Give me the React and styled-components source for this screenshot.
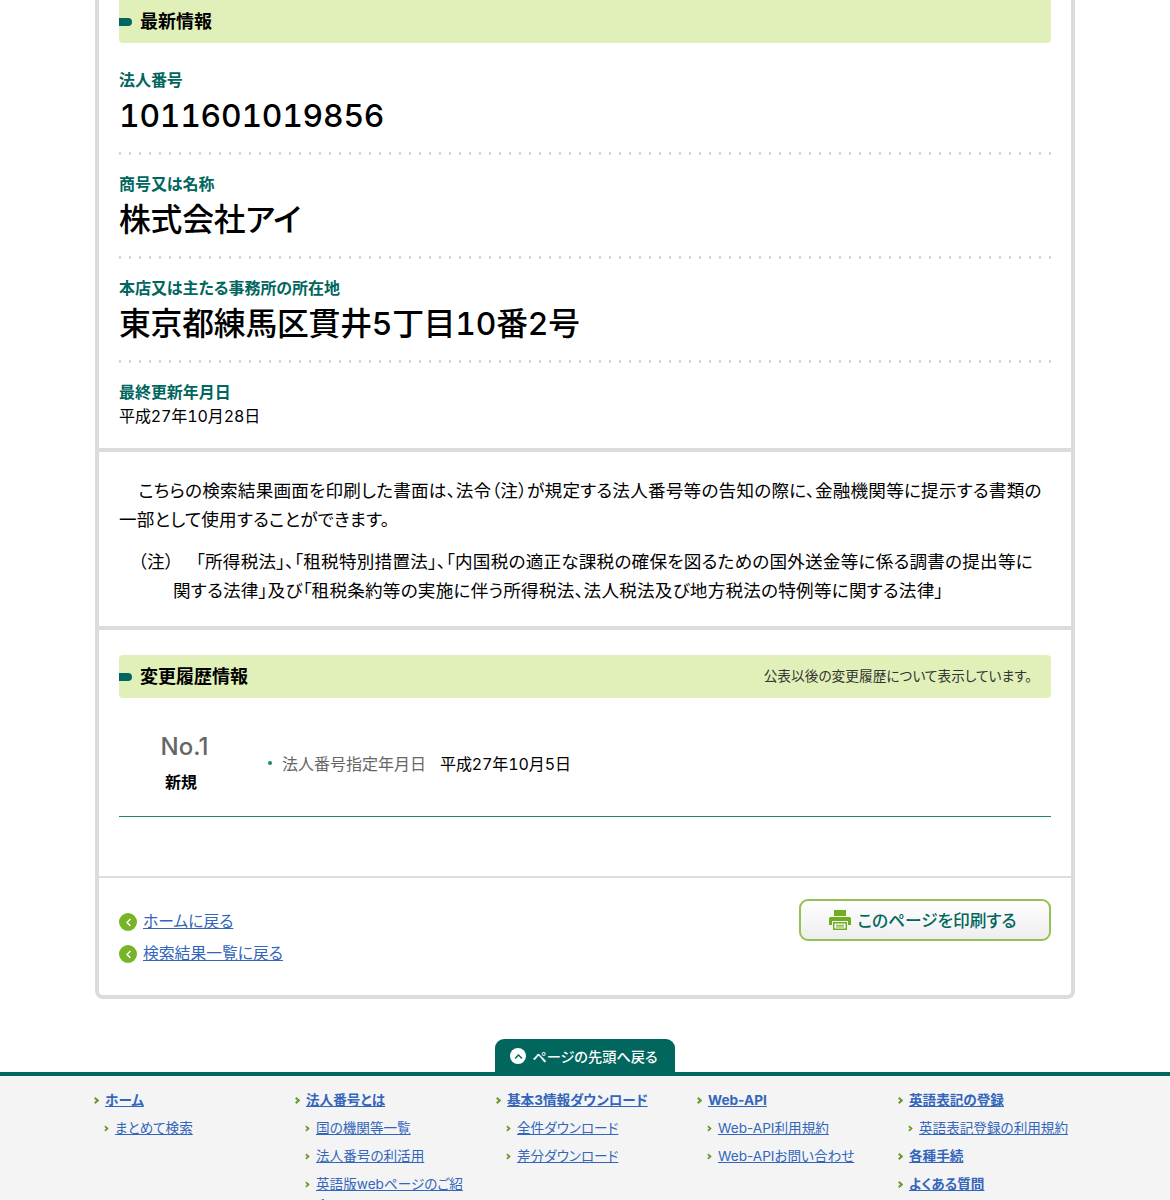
import React from 'react'
import styled, { createGlobalStyle } from 'styled-components'
import { FaChevronLeft, FaChevronUp } from 'react-icons/fa'

const GlobalStyle = createGlobalStyle`
  html, body {
    margin: 0;
    padding: 0;
    background: #fff;
    color: #000;
    font-family: Inter, "Noto Sans CJK JP", "Noto Sans", sans-serif;
    font-size: 16px;
    font-feature-settings: "palt", "tnum";
  }
  a { color: #3366bb; }
`

const Page = styled.div`
  width: 1170px;
  height: 1200px;
  overflow: hidden;
`

const Card = styled.main`
  box-sizing: border-box;
  width: 980px;
  margin: 0 0 0 95px;
  border: 4px solid #dcdcdc;
  border-top: 0;
  border-radius: 0 0 8px 8px;
`

const Section = styled.section`
  padding: ${p => p.$padding || '0 20px'};
  border-bottom: ${p => p.$rule || '0'};
`

const Heading = styled.h2`
  position: relative;
  display: flex;
  align-items: center;
  justify-content: space-between;
  box-sizing: border-box;
  height: 43px;
  margin: 0;
  padding: 0 19px 0 21px;
  background: #e0f0b8;
  border-radius: ${p => (p.$flatTop ? '0 0 4px 4px' : '4px')};
  font-size: 18px;
  font-weight: 700;
  line-height: 43px;

  &::before {
    content: '';
    position: absolute;
    left: 0;
    top: 18px;
    width: 13px;
    height: 8px;
    background: #00665e;
    border-radius: 0 4px 4px 0;
  }
`

const HeadingNote = styled.span`
  font-size: 13.7px;
  font-weight: 400;
  color: #333;
`

const Field = styled.div`
  padding: ${p => p.$padding || '18px 0 14px'};
  background-image: ${p =>
    p.$last ? 'none' : 'radial-gradient(circle, #c8c8c8 1px, transparent 1.3px)'};
  background-size: 10px 3px;
  background-position: -4px bottom;
  background-repeat: repeat-x;
`

const Label = styled.div`
  color: #00665e;
  font-size: 16px;
  font-weight: 700;
  line-height: 22px;
  letter-spacing: -0.05px;
`

const BigValue = styled.div`
  font-size: 31.8px;
  font-weight: 500;
  letter-spacing: -0.2px;
  line-height: 50px;
`

const SmallValue = styled.div`
  font-size: 16px;
  letter-spacing: -0.1px;
  line-height: 26px;
`

const Paragraph = styled.p`
  margin: 0 0 13px;
  font-size: 17.6px;
  letter-spacing: 0.22px;
  line-height: 29px;
  text-indent: ${p => p.$indent || '0'};
  padding: 0 ${p => p.$padRight || '0'} 0 ${p => p.$pad || '0'};
  &:last-child { margin-bottom: 0; }
`

const NoteMark = styled.span`
  display: inline-block;
  width: 58px;
  text-indent: 0;
`

const HistoryRow = styled.div`
  display: flex;
  align-items: center;
  height: 118px;
  border-bottom: 1px solid #1f8a5f;
`

const HistoryNo = styled.div`
  width: 124px;
  text-align: center;
  padding-top: 14px;
`

const NoText = styled.div`
  color: #666;
  font-size: 24px;
  font-weight: 500;
  font-feature-settings: "palt";
  line-height: 35px;
  margin-left: 7px;
`

const NoType = styled.div`
  font-size: 16px;
  font-weight: 700;
  line-height: 36px;
`

const HistoryItem = styled.div`
  position: relative;
  margin: 12px 0 0 24px;
  padding-left: 15px;
  font-size: 16px;
  color: #666;

  &::before {
    content: '';
    position: absolute;
    left: 1px;
    top: 10px;
    width: 4px;
    height: 4px;
    border-radius: 50%;
    background: #1f8a5f;
  }
`

const HistoryDate = styled.span`
  margin-left: 14px;
  color: #000;
  letter-spacing: -0.1px;
`

const Actions = styled.div`
  display: flex;
  justify-content: space-between;
  padding: 21px 20px 30px;
`

const BackList = styled.div`
  display: flex;
  flex-direction: column;
  gap: 10px;
  padding-top: 12px;
`

const BackLink = styled.a`
  display: flex;
  align-items: center;
  gap: 6px;
  font-size: 15.8px;
  line-height: 22px;
  text-decoration: none;

  span { text-decoration: underline; }
`

const BackIcon = styled.i`
  display: flex;
  align-items: center;
  justify-content: center;
  width: 18px;
  height: 18px;
  border-radius: 50%;
  background: #78b428;
  color: #fff;
  font-size: 9px;
`

const PrintButton = styled.button`
  display: flex;
  align-items: center;
  justify-content: center;
  gap: 7px;
  box-sizing: border-box;
  width: 252px;
  height: 42px;
  border: 2px solid #93c250;
  border-radius: 9px;
  background: linear-gradient(#fff, #eeeeee);
  color: #00665e;
  font-family: inherit;
  font-feature-settings: inherit;
  font-size: 16.7px;
  font-weight: 500;
  padding: 0 5px 0 0;
`

const TopTabRow = styled.div`
  display: flex;
  justify-content: center;
  margin-top: 40px;
`

const TopTab = styled.a`
  display: flex;
  align-items: center;
  justify-content: center;
  gap: 6px;
  width: 180px;
  height: 33px;
  padding-top: 1px;
  box-sizing: border-box;
  background: #00665e;
  color: #fff;
  border-radius: 9px 9px 0 0;
  font-size: 14.2px;
  font-weight: 500;
  text-decoration: none;
`

const TopIcon = styled.i`
  display: flex;
  align-items: center;
  justify-content: center;
  width: 16px;
  height: 16px;
  margin-left: -2px;
  border-radius: 50%;
  background: #fff;
  color: #00665e;
  font-size: 9px;
`

const Footer = styled.footer`
  height: 200px;
  border-top: 4px solid #00665e;
  background: #f4f4f4;
`

const FooterGrid = styled.div`
  display: grid;
  grid-template-columns: repeat(5, 201px);
  width: 1005px;
  margin-left: 94px;
  padding-top: 14px;
`

const FooterColumn = styled.div`
  display: flex;
  flex-direction: column;
`

const FooterLink = styled.a`
  position: relative;
  display: block;
  box-sizing: border-box;
  width: ${p => (p.$sub ? '152px' : 'auto')};
  margin: ${p => (p.$sub ? '0 0 7px 21px' : '0 0 7px 11px')};
  color: #3366bb;
  font-size: 13.6px;
  font-feature-settings: "palt";
  font-weight: ${p => (p.$sub ? 400 : 700)};
  line-height: 21px;
  white-space: ${p => (p.$sub ? 'normal' : 'nowrap')};

  &::before {
    content: '';
    position: absolute;
    left: -12px;
    top: 8px;
    width: 3px;
    height: 3px;
    border-top: 2px solid #6a9a2a;
    border-right: 2px solid #6a9a2a;
    transform: scale(${p => (p.$sub ? 0.85 : 1)}) rotate(45deg);
  }
`

const footerColumns = [
  [['ホーム'], ['まとめて検索', true]],
  [['法人番号とは'], ['国の機関等一覧', true], ['法人番号の利活用', true], ['英語版webページのご紹介', true]],
  [['基本3情報ダウンロード'], ['全件ダウンロード', true], ['差分ダウンロード', true]],
  [['Web-API'], ['Web-API利用規約', true], ['Web-APIお問い合わせ', true]],
  [['英語表記の登録'], ['英語表記登録の利用規約', true], ['各種手続'], ['よくある質問']],
]

const PrinterIcon = () => (
  <svg width="22" height="20" viewBox="0 0 22 20">
    <path fill="#6fae1f" d="M5 0h12v6H5zM1.5 7h19A1.5 1.5 0 0 1 22 8.5V15h-3v-4H3v4H0V8.5A1.5 1.5 0 0 1 1.5 7z" />
    <path fill="#6fae1f" d="M4 12h14v8H4z" />
    <path fill="#fff" d="M5.5 13.5h11V18.5h-11z" />
    <path fill="#6fae1f" d="M7 14.8h8v1H7zM7 16.6h8v1H7z" />
  </svg>
)

export default function App() {
  return (
    <Page>
      <GlobalStyle />
      <Card>
        <Section $padding="0 20px 19px" $rule="4px solid #dcdcdc">
          <Heading $flatTop>最新情報</Heading>
          <Field $padding="26px 0 14px">
            <Label>法人番号</Label>
            <BigValue>1011601019856</BigValue>
          </Field>
          <Field>
            <Label>商号又は名称</Label>
            <BigValue>株式会社アイ</BigValue>
          </Field>
          <Field>
            <Label>本店又は主たる事務所の所在地</Label>
            <BigValue>東京都練馬区貫井5丁目10番2号</BigValue>
          </Field>
          <Field $last $padding="18px 0 0">
            <Label>最終更新年月日</Label>
            <SmallValue>平成27年10月28日</SmallValue>
          </Field>
        </Section>
        <Section $padding="24px 20px 21px" $rule="4px solid #dcdcdc">
          <Paragraph $indent="1.1em">
            こちらの検索結果画面を印刷した書面は、法令（注）が規定する法人番号等の告知の際に、金融機関等に提示する書類の一部として使用することができます。
          </Paragraph>
          <Paragraph $pad="54px" $padRight="10px" $indent="-35px">
            <NoteMark>（注）</NoteMark>「所得税法」、「租税特別措置法」、「内国税の適正な課税の確保を図るための国外送金等に係る調書の提出等に関する法律」及び「租税条約等の実施に伴う所得税法、法人税法及び地方税法の特例等に関する法律」
          </Paragraph>
        </Section>
        <Section $padding="25px 20px 59px" $rule="2px solid #dcdcdc">
          <Heading>
            変更履歴情報
            <HeadingNote>公表以後の変更履歴について表示しています。</HeadingNote>
          </Heading>
          <HistoryRow>
            <HistoryNo>
              <NoText>No.1</NoText>
              <NoType>新規</NoType>
            </HistoryNo>
            <HistoryItem>
              法人番号指定年月日<HistoryDate>平成27年10月5日</HistoryDate>
            </HistoryItem>
          </HistoryRow>
        </Section>
        <Actions>
          <BackList>
            <BackLink href="#">
              <BackIcon><FaChevronLeft /></BackIcon>
              <span>ホームに戻る</span>
            </BackLink>
            <BackLink href="#">
              <BackIcon><FaChevronLeft /></BackIcon>
              <span>検索結果一覧に戻る</span>
            </BackLink>
          </BackList>
          <PrintButton>
            <PrinterIcon />
            このページを印刷する
          </PrintButton>
        </Actions>
      </Card>
      <TopTabRow>
        <TopTab href="#">
          <TopIcon><FaChevronUp /></TopIcon>
          ページの先頭へ戻る
        </TopTab>
      </TopTabRow>
      <Footer>
        <FooterGrid>
          {footerColumns.map((links, i) => (
            <FooterColumn key={i}>
              {links.map(([text, sub]) => (
                <FooterLink key={text} href="#" $sub={sub}>{text}</FooterLink>
              ))}
            </FooterColumn>
          ))}
        </FooterGrid>
      </Footer>
    </Page>
  )
}
